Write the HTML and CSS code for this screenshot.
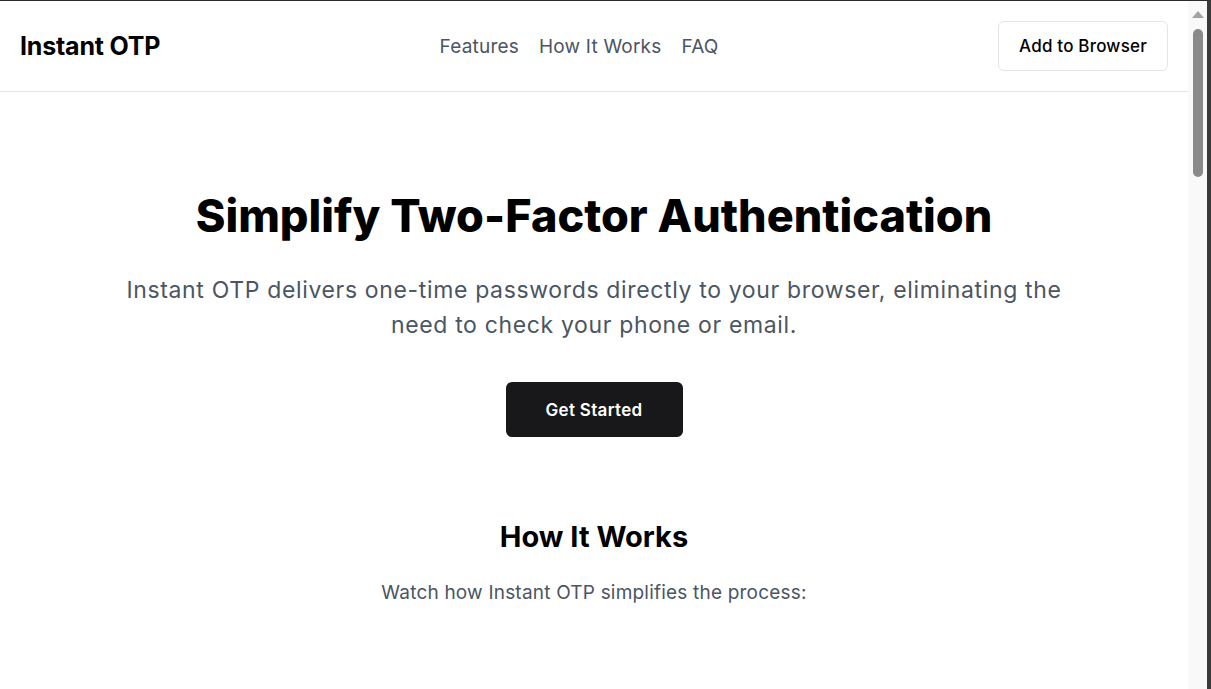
FILE: index.html
```html
<!DOCTYPE html>
<html lang="en">
<head>
	<meta charset="UTF-8">
	<title>Instant OTP</title>
	<link rel="stylesheet" href="styles.css">
</head>
<body>
	<div class="window">
		<div class="page">
			<header class="header">
				<a class="logo" href="javascript:;">Instant OTP</a>
				<nav class="nav">
					<a href="javascript:;">Features</a>
					<a href="javascript:;">How It Works</a>
					<a href="javascript:;">FAQ</a>
				</nav>
				<a class="btn-outline" href="javascript:;">Add to Browser</a>
			</header>

			<section class="hero">
				<h1>Simplify Two-Factor Authentication</h1>
				<p>Instant OTP delivers one-time passwords directly to your browser, eliminating the need to check your phone or email.</p>
				<a class="btn-dark" href="javascript:;">Get Started</a>
			</section>

			<section class="how">
				<h2>How It Works</h2>
				<p>Watch how Instant OTP simplifies the process:</p>
			</section>
		</div>
		<div class="scrollbar">
			<span class="arrow"></span>
			<span class="thumb"></span>
		</div>
	</div>
</body>
</html>
```

FILE: styles.css
```css
*{
	margin:0;
	padding:0;
	box-sizing:border-box;
}
a{
	color:inherit;
	text-decoration:none;
}
body{
	font-family:Inter, "Noto Sans", sans-serif;
	color:#000;
	background:#fff;
	height:689px;
	overflow:hidden;
}
.window{
	display:flex;
	height:689px;
	border-top:1px solid #2b2b2b;
	border-right:4px solid #3a3a3a;
}
.page{
	flex:1;
	min-width:0;
}
.scrollbar{
	width:19px;
	background:#f9f9f9;
	display:flex;
	flex-direction:column;
	align-items:center;
}
.scrollbar .arrow{
	margin-top:10px;
	width:0;
	height:0;
	border-left:6px solid transparent;
	border-right:6px solid transparent;
	border-bottom:7px solid #a3a3a3;
}
.scrollbar .thumb{
	margin-top:11px;
	width:10px;
	height:148px;
	border-radius:5px;
	background:#8a8a8a;
}

/* header */
.header{
	height:91px;
	padding:0 20px;
	display:flex;
	align-items:center;
	justify-content:space-between;
	border-bottom:1px solid #e5e5e5;
}
.logo{
	font-size:25px;
	font-weight:700;
	letter-spacing:-0.2px;
}
.nav{
	display:flex;
	gap:20px;
	font-size:19px;
	letter-spacing:0.2px;
	color:#4b5563;
}
.btn-outline{
	display:flex;
	align-items:center;
	justify-content:center;
	width:170px;
	height:50px;
	border:1px solid #e5e5e5;
	border-radius:6px;
	font-size:17px;
	letter-spacing:0.2px;
	font-weight:450;
}

/* hero */
.hero{
	padding-top:97px;
	text-align:center;
}
.hero h1{
	font-size:45px;
	line-height:54px;
	font-weight:800;
	letter-spacing:0;
}
.hero p{
	max-width:960px;
	margin:30px auto 0;
	font-size:23px;
	line-height:35px;
	letter-spacing:0.65px;
	color:#4b5563;
}
.btn-dark{
	display:inline-flex;
	align-items:center;
	justify-content:center;
	width:177px;
	height:55px;
	margin-top:39px;
	background:#18181b;
	color:#fff;
	border-radius:6px;
	font-size:17px;
	letter-spacing:0.3px;
	font-weight:600;
}

/* how it works */
.how{
	padding-top:82px;
	text-align:center;
}
.how h2{
	font-size:29px;
	line-height:36px;
	font-weight:700;
}
.how p{
	margin-top:26px;
	font-size:19px;
	letter-spacing:0.2px;
	color:#4b5563;
}
```
